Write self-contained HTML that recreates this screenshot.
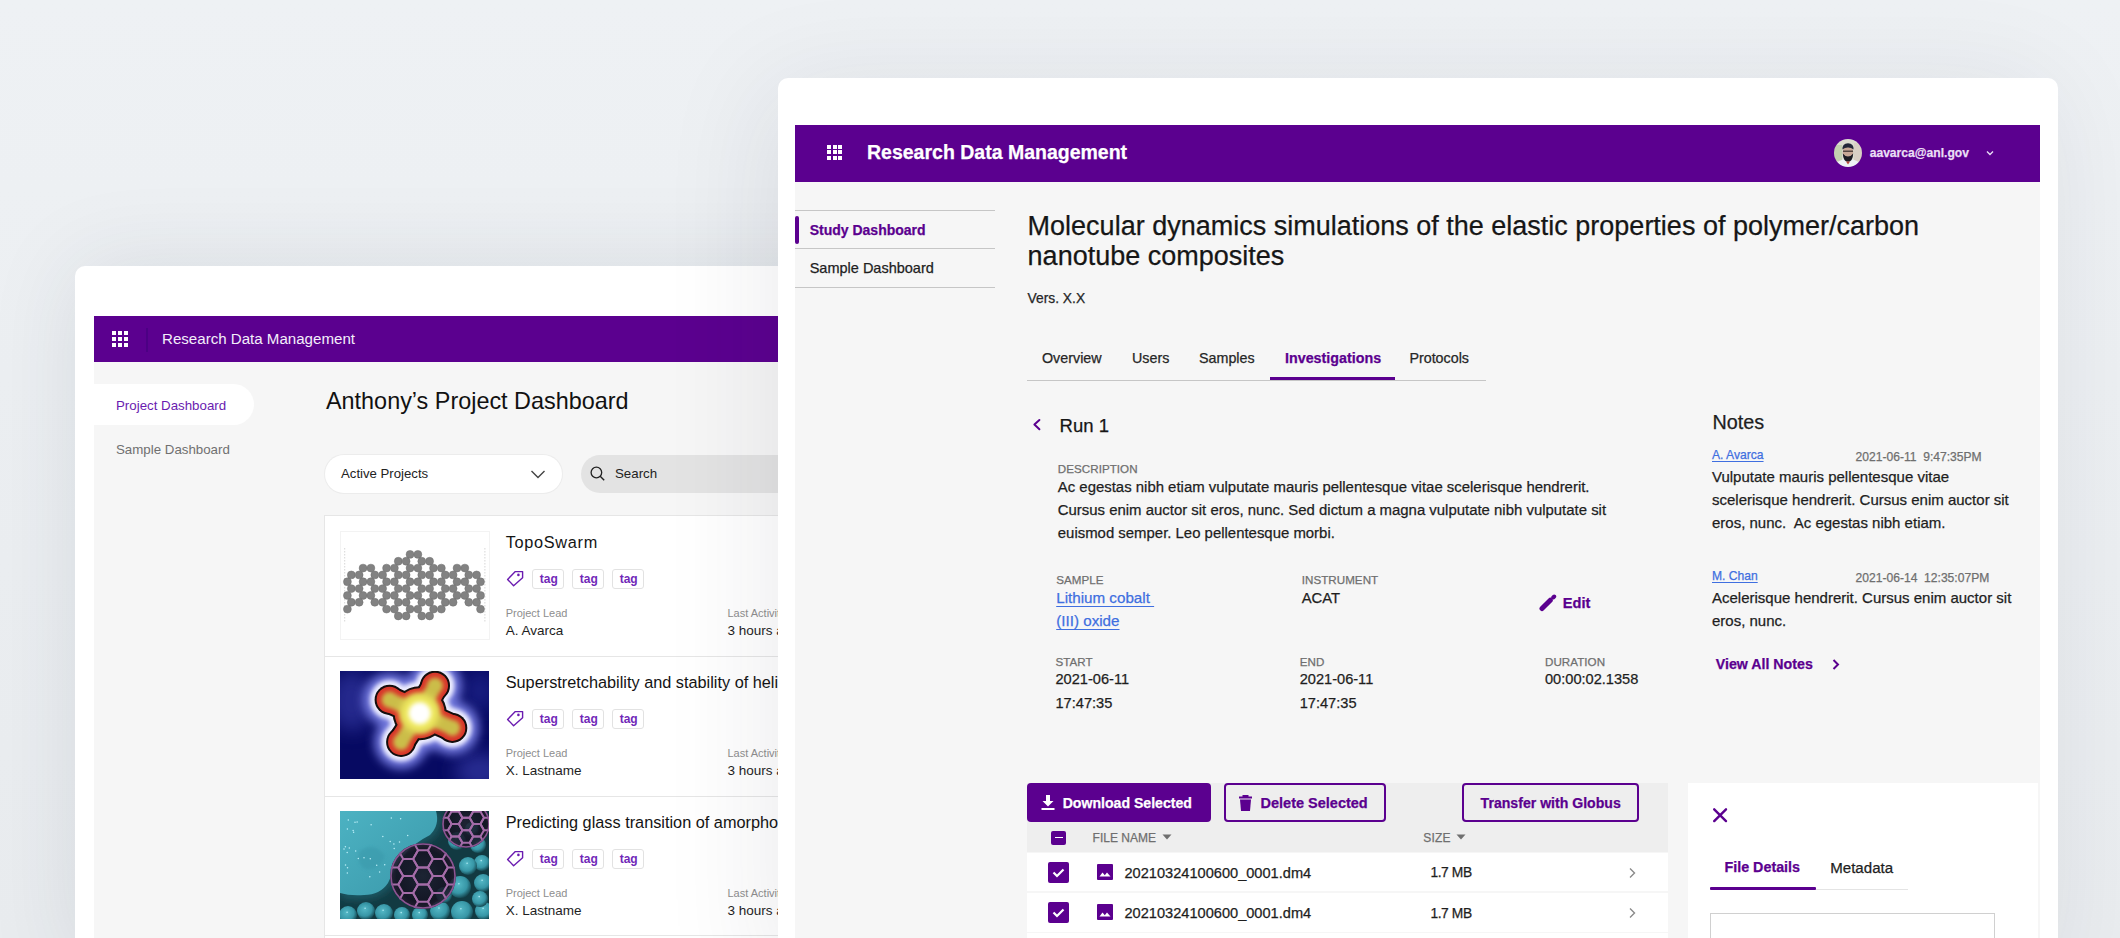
<!DOCTYPE html><html><head><meta charset="utf-8"><style>
html,body{margin:0;padding:0;}
body{width:2120px;height:938px;overflow:hidden;position:relative;background:#edf0f3;font-family:"Liberation Sans", sans-serif;}
.t{position:absolute;white-space:pre;line-height:1;}
.s{-webkit-text-stroke:0.25px currentColor;}
.b{position:absolute;}
</style></head><body>
<div class="b" style="left:0px;top:0px;width:2120px;height:938px;background:linear-gradient(180deg,#eef1f4 0%,#e9ecef 100%);"></div>
<div class="b" style="left:75px;top:266px;width:1000px;height:700px;background:#fff;border-radius:10px;box-shadow:0 0 90px rgba(40,50,70,0.10);"></div>
<div class="b" style="left:94px;top:316px;width:700px;height:46px;background:#5b008f;"></div>
<div class="b" style="left:94px;top:362px;width:700px;height:600px;background:#f6f6f6;"></div>
<div class="b" style="left:112px;top:331px;width:4px;height:4px;background:#fff;"></div>
<div class="b" style="left:112px;top:337px;width:4px;height:4px;background:#fff;"></div>
<div class="b" style="left:112px;top:343px;width:4px;height:4px;background:#fff;"></div>
<div class="b" style="left:118px;top:331px;width:4px;height:4px;background:#fff;"></div>
<div class="b" style="left:118px;top:337px;width:4px;height:4px;background:#fff;"></div>
<div class="b" style="left:118px;top:343px;width:4px;height:4px;background:#fff;"></div>
<div class="b" style="left:124px;top:331px;width:4px;height:4px;background:#fff;"></div>
<div class="b" style="left:124px;top:337px;width:4px;height:4px;background:#fff;"></div>
<div class="b" style="left:124px;top:343px;width:4px;height:4px;background:#fff;"></div>
<div class="b" style="left:146px;top:328px;width:2px;height:24px;background:#4c0084;"></div>
<div class="t " style="left:162.0px;top:331.22px;font-size:15.1px;color:#f3eefa;">Research Data Management</div>
<div class="b" style="left:94px;top:384px;width:160px;height:41px;background:#fff;border-radius:0 21px 21px 0;"></div>
<div class="t " style="left:116.0px;top:398.74px;font-size:13.3px;color:#6a1bb0;">Project Dashboard</div>
<div class="t " style="left:116.0px;top:442.74px;font-size:13.3px;color:#707070;">Sample Dashboard</div>
<div class="t " style="left:326.0px;top:390.19px;font-size:23.4px;color:#111;">Anthony’s Project Dashboard</div>
<div class="b" style="left:325px;top:455px;width:237px;height:38px;background:#fff;border-radius:19px;box-shadow:0 0 0 1px #ececec;"></div>
<div class="t " style="left:341.0px;top:467.43px;font-size:13.2px;color:#222;">Active Projects</div>
<svg style="position:absolute;left:530px;top:468px" width="16" height="12" viewBox="0 0 16 12"><path d="M1.5 3 L8 9.5 L14.5 3" fill="none" stroke="#444" stroke-width="1.4"/></svg>
<div class="b" style="left:581px;top:455px;width:400px;height:38px;background:#e3e3e3;border-radius:19px;"></div>
<svg style="position:absolute;left:589px;top:465px" width="18" height="18" viewBox="0 0 18 18"><circle cx="7.4" cy="7.5" r="5.3" fill="none" stroke="#222" stroke-width="1.3"/><path d="M11.2 11.3 L15.2 15.3" stroke="#222" stroke-width="1.4"/></svg>
<div class="t " style="left:615.0px;top:467.34px;font-size:13.3px;color:#222;">Search</div>
<div class="b" style="left:325px;top:516px;width:700px;height:440px;background:#fff;box-shadow:0 0 0 1px #e6e6e6;"></div>
<div class="b" style="left:341px;top:532px;width:148px;height:107px;background:#fff;box-shadow:0 0 0 1px #f3f3f3;overflow:hidden"><svg width="148" height="107" viewBox="0 0 148 107" style="position:absolute;left:0;top:0"><line x1="3.7" y1="16" x2="3.7" y2="90" stroke="#bbb" stroke-width="0.6" stroke-dasharray="1.5 1.5"/><line x1="143.9" y1="16" x2="143.9" y2="90" stroke="#bbb" stroke-width="0.6" stroke-dasharray="1.5 1.5"/><g fill="#828282" stroke="#6e6e6e" stroke-width="0.5"><circle cx="69.04" cy="22.40" r="3.95"/><circle cx="76.87" cy="22.40" r="3.95"/><circle cx="57.29" cy="29.24" r="3.95"/><circle cx="65.12" cy="29.24" r="3.95"/><circle cx="80.78" cy="29.24" r="3.95"/><circle cx="88.61" cy="29.24" r="3.95"/><circle cx="22.06" cy="36.08" r="3.95"/><circle cx="29.89" cy="36.08" r="3.95"/><circle cx="45.55" cy="36.08" r="3.95"/><circle cx="53.38" cy="36.08" r="3.95"/><circle cx="69.04" cy="36.08" r="3.95"/><circle cx="76.87" cy="36.08" r="3.95"/><circle cx="92.53" cy="36.08" r="3.95"/><circle cx="100.36" cy="36.08" r="3.95"/><circle cx="116.02" cy="36.08" r="3.95"/><circle cx="123.85" cy="36.08" r="3.95"/><circle cx="10.31" cy="42.92" r="3.95"/><circle cx="18.14" cy="42.92" r="3.95"/><circle cx="33.80" cy="42.92" r="3.95"/><circle cx="41.63" cy="42.92" r="3.95"/><circle cx="57.29" cy="42.92" r="3.95"/><circle cx="65.12" cy="42.92" r="3.95"/><circle cx="80.78" cy="42.92" r="3.95"/><circle cx="88.61" cy="42.92" r="3.95"/><circle cx="104.27" cy="42.92" r="3.95"/><circle cx="112.10" cy="42.92" r="3.95"/><circle cx="127.76" cy="42.92" r="3.95"/><circle cx="135.59" cy="42.92" r="3.95"/><circle cx="6.40" cy="49.76" r="3.95"/><circle cx="22.06" cy="49.76" r="3.95"/><circle cx="29.89" cy="49.76" r="3.95"/><circle cx="45.55" cy="49.76" r="3.95"/><circle cx="53.38" cy="49.76" r="3.95"/><circle cx="69.04" cy="49.76" r="3.95"/><circle cx="76.87" cy="49.76" r="3.95"/><circle cx="92.53" cy="49.76" r="3.95"/><circle cx="100.36" cy="49.76" r="3.95"/><circle cx="116.02" cy="49.76" r="3.95"/><circle cx="123.85" cy="49.76" r="3.95"/><circle cx="139.51" cy="49.76" r="3.95"/><circle cx="10.31" cy="56.60" r="3.95"/><circle cx="18.14" cy="56.60" r="3.95"/><circle cx="33.80" cy="56.60" r="3.95"/><circle cx="41.63" cy="56.60" r="3.95"/><circle cx="57.29" cy="56.60" r="3.95"/><circle cx="65.12" cy="56.60" r="3.95"/><circle cx="80.78" cy="56.60" r="3.95"/><circle cx="88.61" cy="56.60" r="3.95"/><circle cx="104.27" cy="56.60" r="3.95"/><circle cx="112.10" cy="56.60" r="3.95"/><circle cx="127.76" cy="56.60" r="3.95"/><circle cx="135.59" cy="56.60" r="3.95"/><circle cx="6.40" cy="63.44" r="3.95"/><circle cx="22.06" cy="63.44" r="3.95"/><circle cx="29.89" cy="63.44" r="3.95"/><circle cx="45.55" cy="63.44" r="3.95"/><circle cx="53.38" cy="63.44" r="3.95"/><circle cx="69.04" cy="63.44" r="3.95"/><circle cx="76.87" cy="63.44" r="3.95"/><circle cx="92.53" cy="63.44" r="3.95"/><circle cx="100.36" cy="63.44" r="3.95"/><circle cx="116.02" cy="63.44" r="3.95"/><circle cx="123.85" cy="63.44" r="3.95"/><circle cx="139.51" cy="63.44" r="3.95"/><circle cx="10.31" cy="70.28" r="3.95"/><circle cx="18.14" cy="70.28" r="3.95"/><circle cx="33.80" cy="70.28" r="3.95"/><circle cx="41.63" cy="70.28" r="3.95"/><circle cx="57.29" cy="70.28" r="3.95"/><circle cx="65.12" cy="70.28" r="3.95"/><circle cx="80.78" cy="70.28" r="3.95"/><circle cx="88.61" cy="70.28" r="3.95"/><circle cx="104.27" cy="70.28" r="3.95"/><circle cx="112.10" cy="70.28" r="3.95"/><circle cx="127.76" cy="70.28" r="3.95"/><circle cx="135.59" cy="70.28" r="3.95"/><circle cx="6.40" cy="77.12" r="3.95"/><circle cx="45.55" cy="77.12" r="3.95"/><circle cx="53.38" cy="77.12" r="3.95"/><circle cx="69.04" cy="77.12" r="3.95"/><circle cx="76.87" cy="77.12" r="3.95"/><circle cx="92.53" cy="77.12" r="3.95"/><circle cx="100.36" cy="77.12" r="3.95"/><circle cx="139.51" cy="77.12" r="3.95"/><circle cx="57.29" cy="83.96" r="3.95"/><circle cx="65.12" cy="83.96" r="3.95"/><circle cx="80.78" cy="83.96" r="3.95"/><circle cx="88.61" cy="83.96" r="3.95"/></g></svg></div>
<div class="t " style="left:505.7px;top:533.80px;font-size:16.3px;color:#141414;letter-spacing:0.7px;">TopoSwarm</div>
<svg style="position:absolute;left:506px;top:570px" width="18" height="18" viewBox="0 0 18 18"><path d="M1.6 9.4 L9.3 1.6 L16.6 1.6 L16.6 7.7 L7.6 15.7 Z" fill="none" stroke="#6a1bb0" stroke-width="1.4" stroke-linejoin="round"/><circle cx="12.4" cy="4.9" r="1.3" fill="#6a1bb0"/></svg>
<div class="b" style="left:532.3px;top:568.5px;width:30px;height:18px;border:1px solid #e2e2e2;border-radius:3px;background:#fff"></div>
<div class="t " style="left:539.8px;top:573.04px;font-size:12px;color:#7028b8;font-weight:700;">tag</div>
<div class="b" style="left:572.3px;top:568.5px;width:30px;height:18px;border:1px solid #e2e2e2;border-radius:3px;background:#fff"></div>
<div class="t " style="left:579.8px;top:573.04px;font-size:12px;color:#7028b8;font-weight:700;">tag</div>
<div class="b" style="left:612.2px;top:568.5px;width:30px;height:18px;border:1px solid #e2e2e2;border-radius:3px;background:#fff"></div>
<div class="t " style="left:619.7px;top:573.04px;font-size:12px;color:#7028b8;font-weight:700;">tag</div>
<div class="t " style="left:505.7px;top:608.39px;font-size:11px;color:#8e8e8e;">Project Lead</div>
<div class="t " style="left:505.7px;top:624.07px;font-size:13.5px;color:#1e1e1e;">A. Avarca</div>
<div class="t " style="left:727.5px;top:608.39px;font-size:11px;color:#8e8e8e;">Last Activity</div>
<div class="t " style="left:727.5px;top:624.07px;font-size:13.5px;color:#1e1e1e;">3 hours ago</div>
<div class="b" style="left:325px;top:656px;width:700px;height:1px;background:#e6e6e6;"></div>
<div class="b" style="left:340px;top:671px;width:149px;height:108px;overflow:hidden"><svg width="149" height="108" viewBox="0 0 149 108" style="position:absolute;left:0;top:0"><defs><filter id="bl1" x="-50%" y="-50%" width="200%" height="200%"><feGaussianBlur stdDeviation="5"/></filter><filter id="bl2" x="-50%" y="-50%" width="200%" height="200%"><feGaussianBlur stdDeviation="2.2"/></filter><filter id="bl4" x="-50%" y="-50%" width="200%" height="200%"><feGaussianBlur stdDeviation="0.7"/></filter><filter id="bl3" x="-50%" y="-50%" width="200%" height="200%"><feGaussianBlur stdDeviation="3.5"/></filter><filter id="bl5" x="-50%" y="-50%" width="200%" height="200%"><feGaussianBlur stdDeviation="9"/></filter></defs><rect width="149" height="108" fill="#070a62"/><ellipse cx="12" cy="30" rx="22" ry="30" fill="#3c42b0" opacity="0.55" filter="url(#bl5)"/><ellipse cx="140" cy="100" rx="25" ry="18" fill="#3c42b0" opacity="0.6" filter="url(#bl5)"/><ellipse cx="140" cy="20" rx="15" ry="20" fill="#2c32a0" opacity="0.5" filter="url(#bl5)"/><g filter="url(#bl1)"><line x1="79.7" y1="42.2" x2="49.6" y2="28.8" stroke="#7076dc" stroke-width="52.4" stroke-linecap="round"/><line x1="79.7" y1="42.2" x2="95" y2="14.7" stroke="#7076dc" stroke-width="52.4" stroke-linecap="round"/><line x1="79.7" y1="42.2" x2="112.3" y2="56.9" stroke="#7076dc" stroke-width="52.4" stroke-linecap="round"/><line x1="79.7" y1="42.2" x2="61.1" y2="71" stroke="#7076dc" stroke-width="52.4" stroke-linecap="round"/><circle cx="49.6" cy="28.8" r="27.0" fill="#7076dc"/><circle cx="95" cy="14.7" r="27.0" fill="#7076dc"/><circle cx="112.3" cy="56.9" r="27.0" fill="#7076dc"/><circle cx="61.1" cy="71" r="27.0" fill="#7076dc"/><circle cx="79.7" cy="42.2" r="39.0" fill="#7076dc"/></g><g filter="url(#bl2)"><line x1="79.7" y1="42.2" x2="49.6" y2="28.8" stroke="#eeeeff" stroke-width="37.4" stroke-linecap="round"/><line x1="79.7" y1="42.2" x2="95" y2="14.7" stroke="#eeeeff" stroke-width="37.4" stroke-linecap="round"/><line x1="79.7" y1="42.2" x2="112.3" y2="56.9" stroke="#eeeeff" stroke-width="37.4" stroke-linecap="round"/><line x1="79.7" y1="42.2" x2="61.1" y2="71" stroke="#eeeeff" stroke-width="37.4" stroke-linecap="round"/><circle cx="49.6" cy="28.8" r="19.5" fill="#eeeeff"/><circle cx="95" cy="14.7" r="19.5" fill="#eeeeff"/><circle cx="112.3" cy="56.9" r="19.5" fill="#eeeeff"/><circle cx="61.1" cy="71" r="19.5" fill="#eeeeff"/><circle cx="79.7" cy="42.2" r="31.5" fill="#eeeeff"/></g><g filter="url(#bl4)"><line x1="79.7" y1="42.2" x2="49.6" y2="28.8" stroke="#120c10" stroke-width="28.4" stroke-linecap="round"/><line x1="79.7" y1="42.2" x2="95" y2="14.7" stroke="#120c10" stroke-width="28.4" stroke-linecap="round"/><line x1="79.7" y1="42.2" x2="112.3" y2="56.9" stroke="#120c10" stroke-width="28.4" stroke-linecap="round"/><line x1="79.7" y1="42.2" x2="61.1" y2="71" stroke="#120c10" stroke-width="28.4" stroke-linecap="round"/><circle cx="49.6" cy="28.8" r="15.0" fill="#120c10"/><circle cx="95" cy="14.7" r="15.0" fill="#120c10"/><circle cx="112.3" cy="56.9" r="15.0" fill="#120c10"/><circle cx="61.1" cy="71" r="15.0" fill="#120c10"/><circle cx="79.7" cy="42.2" r="27.0" fill="#120c10"/></g><g filter="url(#bl4)"><line x1="79.7" y1="42.2" x2="49.6" y2="28.8" stroke="#d8362a" stroke-width="24.4" stroke-linecap="round"/><line x1="79.7" y1="42.2" x2="95" y2="14.7" stroke="#d8362a" stroke-width="24.4" stroke-linecap="round"/><line x1="79.7" y1="42.2" x2="112.3" y2="56.9" stroke="#d8362a" stroke-width="24.4" stroke-linecap="round"/><line x1="79.7" y1="42.2" x2="61.1" y2="71" stroke="#d8362a" stroke-width="24.4" stroke-linecap="round"/><circle cx="49.6" cy="28.8" r="13.0" fill="#d8362a"/><circle cx="95" cy="14.7" r="13.0" fill="#d8362a"/><circle cx="112.3" cy="56.9" r="13.0" fill="#d8362a"/><circle cx="61.1" cy="71" r="13.0" fill="#d8362a"/><circle cx="79.7" cy="42.2" r="25.0" fill="#d8362a"/></g><g filter="url(#bl2)"><line x1="79.7" y1="42.2" x2="49.6" y2="28.8" stroke="#cbbd4a" stroke-width="14.4" stroke-linecap="round"/><line x1="79.7" y1="42.2" x2="95" y2="14.7" stroke="#cbbd4a" stroke-width="14.4" stroke-linecap="round"/><line x1="79.7" y1="42.2" x2="112.3" y2="56.9" stroke="#cbbd4a" stroke-width="14.4" stroke-linecap="round"/><line x1="79.7" y1="42.2" x2="61.1" y2="71" stroke="#cbbd4a" stroke-width="14.4" stroke-linecap="round"/><circle cx="49.6" cy="28.8" r="8.0" fill="#cbbd4a"/><circle cx="95" cy="14.7" r="8.0" fill="#cbbd4a"/><circle cx="112.3" cy="56.9" r="8.0" fill="#cbbd4a"/><circle cx="61.1" cy="71" r="8.0" fill="#cbbd4a"/><circle cx="79.7" cy="42.2" r="20.0" fill="#cbbd4a"/></g><circle cx="79.7" cy="42.2" r="19" fill="#f0ea60" filter="url(#bl3)"/><circle cx="79.7" cy="42.2" r="11" fill="#ffffff" filter="url(#bl2)"/></svg></div>
<div class="t " style="left:505.7px;top:673.80px;font-size:16.3px;color:#141414;">Superstretchability and stability of helical structures</div>
<svg style="position:absolute;left:506px;top:710px" width="18" height="18" viewBox="0 0 18 18"><path d="M1.6 9.4 L9.3 1.6 L16.6 1.6 L16.6 7.7 L7.6 15.7 Z" fill="none" stroke="#6a1bb0" stroke-width="1.4" stroke-linejoin="round"/><circle cx="12.4" cy="4.9" r="1.3" fill="#6a1bb0"/></svg>
<div class="b" style="left:532.3px;top:708.5px;width:30px;height:18px;border:1px solid #e2e2e2;border-radius:3px;background:#fff"></div>
<div class="t " style="left:539.8px;top:713.04px;font-size:12px;color:#7028b8;font-weight:700;">tag</div>
<div class="b" style="left:572.3px;top:708.5px;width:30px;height:18px;border:1px solid #e2e2e2;border-radius:3px;background:#fff"></div>
<div class="t " style="left:579.8px;top:713.04px;font-size:12px;color:#7028b8;font-weight:700;">tag</div>
<div class="b" style="left:612.2px;top:708.5px;width:30px;height:18px;border:1px solid #e2e2e2;border-radius:3px;background:#fff"></div>
<div class="t " style="left:619.7px;top:713.04px;font-size:12px;color:#7028b8;font-weight:700;">tag</div>
<div class="t " style="left:505.7px;top:748.39px;font-size:11px;color:#8e8e8e;">Project Lead</div>
<div class="t " style="left:505.7px;top:764.07px;font-size:13.5px;color:#1e1e1e;">X. Lastname</div>
<div class="t " style="left:727.5px;top:748.39px;font-size:11px;color:#8e8e8e;">Last Activity</div>
<div class="t " style="left:727.5px;top:764.07px;font-size:13.5px;color:#1e1e1e;">3 hours ago</div>
<div class="b" style="left:325px;top:796px;width:700px;height:1px;background:#e6e6e6;"></div>
<div class="b" style="left:325px;top:935px;width:700px;height:1px;background:#e6e6e6;"></div>
<div class="b" style="left:340px;top:811px;width:149px;height:108px;overflow:hidden"><svg width="149" height="108" viewBox="0 0 149 108" style="position:absolute;left:0;top:0"><defs><radialGradient id="sp" cx="0.42" cy="0.38" r="0.62"><stop offset="0" stop-color="#54b8c6"/><stop offset="0.65" stop-color="#3796a6"/><stop offset="1" stop-color="#174c56"/></radialGradient><radialGradient id="bb" cx="0.5" cy="0.5" r="0.5"><stop offset="0" stop-color="#1e2030"/><stop offset="0.8" stop-color="#141020"/><stop offset="1" stop-color="#2a1a30"/></radialGradient><linearGradient id="tb" x1="0" y1="0" x2="1" y2="1"><stop offset="0" stop-color="#4cb2c2"/><stop offset="1" stop-color="#3a98aa"/></linearGradient><filter id="bb1" x="-30%" y="-30%" width="160%" height="160%"><feGaussianBlur stdDeviation="1.5"/></filter><filter id="bb2" x="-30%" y="-30%" width="160%" height="160%"><feGaussianBlur stdDeviation="4"/></filter></defs><rect width="149" height="108" fill="#123a42"/><circle cx="8" cy="104" r="9" fill="url(#sp)"/><circle cx="7.1" cy="101.3" r="0.8" fill="#c8f8ff" opacity="0.8"/><circle cx="26" cy="100" r="9" fill="url(#sp)"/><circle cx="25.1" cy="97.3" r="0.8" fill="#c8f8ff" opacity="0.8"/><circle cx="44" cy="102" r="9" fill="url(#sp)"/><circle cx="43.1" cy="99.3" r="0.8" fill="#c8f8ff" opacity="0.8"/><circle cx="62" cy="104" r="8" fill="url(#sp)"/><circle cx="61.2" cy="101.6" r="0.8" fill="#c8f8ff" opacity="0.8"/><circle cx="80" cy="104" r="8" fill="url(#sp)"/><circle cx="79.2" cy="101.6" r="0.8" fill="#c8f8ff" opacity="0.8"/><circle cx="100" cy="100" r="10" fill="url(#sp)"/><circle cx="99.0" cy="97.0" r="0.8" fill="#c8f8ff" opacity="0.8"/><circle cx="122" cy="101" r="11" fill="url(#sp)"/><circle cx="120.9" cy="97.7" r="0.8" fill="#c8f8ff" opacity="0.8"/><circle cx="144" cy="100" r="9" fill="url(#sp)"/><circle cx="143.1" cy="97.3" r="0.8" fill="#c8f8ff" opacity="0.8"/><circle cx="120" cy="76" r="11" fill="url(#sp)"/><circle cx="118.9" cy="72.7" r="0.8" fill="#c8f8ff" opacity="0.8"/><circle cx="143" cy="72" r="9" fill="url(#sp)"/><circle cx="142.1" cy="69.3" r="0.8" fill="#c8f8ff" opacity="0.8"/><circle cx="142" cy="52" r="8" fill="url(#sp)"/><circle cx="141.2" cy="49.6" r="0.8" fill="#c8f8ff" opacity="0.8"/><circle cx="128" cy="55" r="9" fill="url(#sp)"/><circle cx="127.1" cy="52.3" r="0.8" fill="#c8f8ff" opacity="0.8"/><circle cx="138" cy="34" r="8" fill="url(#sp)"/><circle cx="137.2" cy="31.6" r="0.8" fill="#c8f8ff" opacity="0.8"/><circle cx="117" cy="30" r="9" fill="url(#sp)"/><circle cx="116.1" cy="27.3" r="0.8" fill="#c8f8ff" opacity="0.8"/><circle cx="104" cy="84" r="8" fill="url(#sp)"/><circle cx="103.2" cy="81.6" r="0.8" fill="#c8f8ff" opacity="0.8"/><circle cx="140" cy="88" r="8" fill="url(#sp)"/><circle cx="139.2" cy="85.6" r="0.8" fill="#c8f8ff" opacity="0.8"/><circle cx="132" cy="18" r="7" fill="url(#sp)"/><circle cx="131.3" cy="15.9" r="0.8" fill="#c8f8ff" opacity="0.8"/><path d="M0 0 H100 Q104 14 94 26 Q78 34 68 46 Q58 60 52 74 Q44 86 26 88 Q10 90 0 86 Z" fill="#1c5a66" filter="url(#bb2)"/><path d="M0 0 H96 Q100 14 90 24 Q74 32 64 44 Q54 58 48 72 Q40 84 24 84 Q10 85 0 82 Z" fill="url(#tb)"/><path d="M20 40 Q35 30 45 45 Q40 60 25 58 Q15 52 20 40 Z" fill="#3a9aac" opacity="0.6" filter="url(#bb1)"/><circle cx="31.1" cy="13.8" r="0.75" fill="#c8f6ff" opacity="0.9"/><circle cx="60.6" cy="7.7" r="0.75" fill="#c8f6ff" opacity="0.9"/><circle cx="50.2" cy="30.5" r="0.75" fill="#c8f6ff" opacity="0.9"/><circle cx="7.2" cy="41.6" r="0.75" fill="#c8f6ff" opacity="0.9"/><circle cx="5.4" cy="35.8" r="0.75" fill="#c8f6ff" opacity="0.9"/><circle cx="8.3" cy="9.1" r="0.75" fill="#c8f6ff" opacity="0.9"/><circle cx="13.1" cy="19.4" r="0.75" fill="#c8f6ff" opacity="0.9"/><circle cx="53.9" cy="32.9" r="0.75" fill="#c8f6ff" opacity="0.9"/><circle cx="15.0" cy="11.2" r="0.75" fill="#c8f6ff" opacity="0.9"/><circle cx="29.8" cy="65.7" r="0.75" fill="#c8f6ff" opacity="0.9"/><circle cx="18.3" cy="47.4" r="0.75" fill="#c8f6ff" opacity="0.9"/><circle cx="59.5" cy="31.0" r="0.75" fill="#c8f6ff" opacity="0.9"/><circle cx="51.3" cy="6.9" r="0.75" fill="#c8f6ff" opacity="0.9"/><circle cx="7.4" cy="18.1" r="0.75" fill="#c8f6ff" opacity="0.9"/><circle cx="30.3" cy="47.7" r="0.75" fill="#c8f6ff" opacity="0.9"/><circle cx="42.8" cy="25.4" r="0.75" fill="#c8f6ff" opacity="0.9"/><circle cx="24.0" cy="46.8" r="0.75" fill="#c8f6ff" opacity="0.9"/><circle cx="67.7" cy="24.5" r="0.75" fill="#c8f6ff" opacity="0.9"/><circle cx="39.6" cy="61.1" r="0.75" fill="#c8f6ff" opacity="0.9"/><circle cx="15.7" cy="40.1" r="0.75" fill="#c8f6ff" opacity="0.9"/><circle cx="5.5" cy="54.1" r="0.75" fill="#c8f6ff" opacity="0.9"/><circle cx="54.2" cy="37.6" r="0.75" fill="#c8f6ff" opacity="0.9"/><circle cx="44.7" cy="53.8" r="0.75" fill="#c8f6ff" opacity="0.9"/><circle cx="7.5" cy="56.7" r="0.75" fill="#c8f6ff" opacity="0.9"/><circle cx="36.7" cy="54.2" r="0.75" fill="#c8f6ff" opacity="0.9"/><circle cx="4.0" cy="38.0" r="0.75" fill="#c8f6ff" opacity="0.9"/><circle cx="17.1" cy="11.1" r="0.75" fill="#c8f6ff" opacity="0.9"/><circle cx="7.3" cy="61.9" r="0.75" fill="#c8f6ff" opacity="0.9"/><circle cx="13.6" cy="21.3" r="0.75" fill="#c8f6ff" opacity="0.9"/><circle cx="9.3" cy="37.0" r="0.75" fill="#c8f6ff" opacity="0.9"/><circle cx="126" cy="13" r="24" fill="url(#bb)" opacity="0.85"/><clipPath id="cp126"><circle cx="126" cy="13" r="24"/></clipPath><g clip-path="url(#cp126)"><polygon points="111.6,13.0 108.0,19.2 100.8,19.2 97.2,13.0 100.8,6.8 108.0,6.8" fill="none" stroke="#a46ca8" stroke-width="2" stroke-linejoin="round"/><polygon points="122.4,-5.7 118.8,0.5 111.6,0.5 108.0,-5.7 111.6,-11.9 118.8,-11.9" fill="none" stroke="#a46ca8" stroke-width="2" stroke-linejoin="round"/><polygon points="122.4,6.8 118.8,13.0 111.6,13.0 108.0,6.8 111.6,0.5 118.8,0.5" fill="none" stroke="#a46ca8" stroke-width="2" stroke-linejoin="round"/><polygon points="122.4,19.2 118.8,25.5 111.6,25.5 108.0,19.2 111.6,13.0 118.8,13.0" fill="none" stroke="#a46ca8" stroke-width="2" stroke-linejoin="round"/><polygon points="122.4,31.7 118.8,37.9 111.6,37.9 108.0,31.7 111.6,25.5 118.8,25.5" fill="none" stroke="#a46ca8" stroke-width="2" stroke-linejoin="round"/><polygon points="133.2,0.5 129.6,6.8 122.4,6.8 118.8,0.5 122.4,-5.7 129.6,-5.7" fill="none" stroke="#a46ca8" stroke-width="2" stroke-linejoin="round"/><polygon points="133.2,13.0 129.6,19.2 122.4,19.2 118.8,13.0 122.4,6.8 129.6,6.8" fill="none" stroke="#a46ca8" stroke-width="2" stroke-linejoin="round"/><polygon points="133.2,25.5 129.6,31.7 122.4,31.7 118.8,25.5 122.4,19.2 129.6,19.2" fill="none" stroke="#a46ca8" stroke-width="2" stroke-linejoin="round"/><polygon points="144.0,-5.7 140.4,0.5 133.2,0.5 129.6,-5.7 133.2,-11.9 140.4,-11.9" fill="none" stroke="#a46ca8" stroke-width="2" stroke-linejoin="round"/><polygon points="144.0,6.8 140.4,13.0 133.2,13.0 129.6,6.8 133.2,0.5 140.4,0.5" fill="none" stroke="#a46ca8" stroke-width="2" stroke-linejoin="round"/><polygon points="144.0,19.2 140.4,25.5 133.2,25.5 129.6,19.2 133.2,13.0 140.4,13.0" fill="none" stroke="#a46ca8" stroke-width="2" stroke-linejoin="round"/><polygon points="144.0,31.7 140.4,37.9 133.2,37.9 129.6,31.7 133.2,25.5 140.4,25.5" fill="none" stroke="#a46ca8" stroke-width="2" stroke-linejoin="round"/><polygon points="154.8,13.0 151.2,19.2 144.0,19.2 140.4,13.0 144.0,6.8 151.2,6.8" fill="none" stroke="#a46ca8" stroke-width="2" stroke-linejoin="round"/></g><circle cx="126" cy="13" r="23" fill="none" stroke="#8c5694" stroke-width="1.6"/><circle cx="83" cy="65" r="33" fill="url(#bb)" opacity="0.85"/><clipPath id="cp83"><circle cx="83" cy="65" r="33"/></clipPath><g clip-path="url(#cp83)"><polygon points="63.2,65.0 58.2,73.6 48.4,73.6 43.4,65.0 48.3,56.4 58.2,56.4" fill="none" stroke="#a46ca8" stroke-width="2" stroke-linejoin="round"/><polygon points="78.1,39.3 73.1,47.9 63.2,47.9 58.3,39.3 63.2,30.7 73.1,30.7" fill="none" stroke="#a46ca8" stroke-width="2" stroke-linejoin="round"/><polygon points="78.1,56.4 73.1,65.0 63.2,65.0 58.3,56.4 63.2,47.9 73.1,47.9" fill="none" stroke="#a46ca8" stroke-width="2" stroke-linejoin="round"/><polygon points="78.1,73.6 73.1,82.1 63.2,82.1 58.3,73.6 63.2,65.0 73.1,65.0" fill="none" stroke="#a46ca8" stroke-width="2" stroke-linejoin="round"/><polygon points="78.1,90.7 73.1,99.3 63.2,99.3 58.3,90.7 63.2,82.1 73.1,82.1" fill="none" stroke="#a46ca8" stroke-width="2" stroke-linejoin="round"/><polygon points="92.9,47.9 88.0,56.4 78.0,56.4 73.1,47.9 78.0,39.3 88.0,39.3" fill="none" stroke="#a46ca8" stroke-width="2" stroke-linejoin="round"/><polygon points="92.9,65.0 88.0,73.6 78.0,73.6 73.1,65.0 78.0,56.4 88.0,56.4" fill="none" stroke="#a46ca8" stroke-width="2" stroke-linejoin="round"/><polygon points="92.9,82.1 88.0,90.7 78.0,90.7 73.1,82.1 78.0,73.6 88.0,73.6" fill="none" stroke="#a46ca8" stroke-width="2" stroke-linejoin="round"/><polygon points="107.8,39.3 102.8,47.9 92.9,47.9 87.9,39.3 92.9,30.7 102.8,30.7" fill="none" stroke="#a46ca8" stroke-width="2" stroke-linejoin="round"/><polygon points="107.8,56.4 102.8,65.0 92.9,65.0 87.9,56.4 92.9,47.9 102.8,47.9" fill="none" stroke="#a46ca8" stroke-width="2" stroke-linejoin="round"/><polygon points="107.8,73.6 102.8,82.1 92.9,82.1 87.9,73.6 92.9,65.0 102.8,65.0" fill="none" stroke="#a46ca8" stroke-width="2" stroke-linejoin="round"/><polygon points="107.8,90.7 102.8,99.3 92.9,99.3 87.9,90.7 92.9,82.1 102.8,82.1" fill="none" stroke="#a46ca8" stroke-width="2" stroke-linejoin="round"/><polygon points="122.6,65.0 117.7,73.6 107.8,73.6 102.8,65.0 107.8,56.4 117.7,56.4" fill="none" stroke="#a46ca8" stroke-width="2" stroke-linejoin="round"/></g><circle cx="83" cy="65" r="32" fill="none" stroke="#8c5694" stroke-width="1.6"/></svg></div>
<div class="t " style="left:505.7px;top:813.80px;font-size:16.3px;color:#141414;">Predicting glass transition of amorphous polymers</div>
<svg style="position:absolute;left:506px;top:850px" width="18" height="18" viewBox="0 0 18 18"><path d="M1.6 9.4 L9.3 1.6 L16.6 1.6 L16.6 7.7 L7.6 15.7 Z" fill="none" stroke="#6a1bb0" stroke-width="1.4" stroke-linejoin="round"/><circle cx="12.4" cy="4.9" r="1.3" fill="#6a1bb0"/></svg>
<div class="b" style="left:532.3px;top:848.5px;width:30px;height:18px;border:1px solid #e2e2e2;border-radius:3px;background:#fff"></div>
<div class="t " style="left:539.8px;top:853.04px;font-size:12px;color:#7028b8;font-weight:700;">tag</div>
<div class="b" style="left:572.3px;top:848.5px;width:30px;height:18px;border:1px solid #e2e2e2;border-radius:3px;background:#fff"></div>
<div class="t " style="left:579.8px;top:853.04px;font-size:12px;color:#7028b8;font-weight:700;">tag</div>
<div class="b" style="left:612.2px;top:848.5px;width:30px;height:18px;border:1px solid #e2e2e2;border-radius:3px;background:#fff"></div>
<div class="t " style="left:619.7px;top:853.04px;font-size:12px;color:#7028b8;font-weight:700;">tag</div>
<div class="t " style="left:505.7px;top:888.39px;font-size:11px;color:#8e8e8e;">Project Lead</div>
<div class="t " style="left:505.7px;top:904.07px;font-size:13.5px;color:#1e1e1e;">X. Lastname</div>
<div class="t " style="left:727.5px;top:888.39px;font-size:11px;color:#8e8e8e;">Last Activity</div>
<div class="t " style="left:727.5px;top:904.07px;font-size:13.5px;color:#1e1e1e;">3 hours ago</div>
<div class="b" style="left:778px;top:78px;width:1280px;height:900px;background:#fff;border-radius:10px;box-shadow:-12px 10px 110px rgba(30,40,60,0.085);"></div>
<div class="b" style="left:795px;top:125px;width:1245px;height:57px;background:#5b008f;"></div>
<div class="b" style="left:795px;top:182px;width:1245px;height:800px;background:#f6f6f6;"></div>
<div class="b" style="left:827.3px;top:145.0px;width:4px;height:4px;background:#fff;"></div>
<div class="b" style="left:827.3px;top:150.3px;width:4px;height:4px;background:#fff;"></div>
<div class="b" style="left:827.3px;top:155.6px;width:4px;height:4px;background:#fff;"></div>
<div class="b" style="left:832.5999999999999px;top:145.0px;width:4px;height:4px;background:#fff;"></div>
<div class="b" style="left:832.5999999999999px;top:150.3px;width:4px;height:4px;background:#fff;"></div>
<div class="b" style="left:832.5999999999999px;top:155.6px;width:4px;height:4px;background:#fff;"></div>
<div class="b" style="left:837.9px;top:145.0px;width:4px;height:4px;background:#fff;"></div>
<div class="b" style="left:837.9px;top:150.3px;width:4px;height:4px;background:#fff;"></div>
<div class="b" style="left:837.9px;top:155.6px;width:4px;height:4px;background:#fff;"></div>
<div class="t s" style="left:867.0px;top:143.49px;font-size:19.5px;color:#fff;font-weight:700;">Research Data Management</div>
<svg style="position:absolute;left:1834px;top:139px" width="28" height="28" viewBox="0 0 28 28">
<defs><clipPath id="av"><circle cx="14" cy="14" r="14"/></clipPath><filter id="avb"><feGaussianBlur stdDeviation="0.6"/></filter></defs>
<g clip-path="url(#av)"><g filter="url(#avb)"><rect width="28" height="28" fill="#dcdcd0"/><rect x="0" y="6" width="8" height="16" fill="#c4d0b0"/><rect x="20" y="4" width="8" height="18" fill="#d8cfc4"/>
<path d="M1 28 Q3 20 14 20 Q25 20 27 28 Z" fill="#eef2f6"/>
<ellipse cx="14" cy="13" rx="5.4" ry="6.6" fill="#c8a896"/>
<path d="M8.4 10.5 Q8 4.5 14 4.2 Q20 4.5 19.6 10.5 Q17 8.5 14 8.6 Q11 8.5 8.4 10.5 Z" fill="#222838"/>
<rect x="9" y="11.6" width="10" height="1.2" fill="#3a3030"/>
<path d="M8.8 14.5 Q9.2 22.5 14 22.8 Q18.8 22.5 19.2 14.5 Q17 17.5 14 17.5 Q11 17.5 8.8 14.5 Z" fill="#1a1a22"/>
<path d="M12 22.5 L14 25.5 L16 22.5 Z" fill="#b84838"/>
</g></g></svg>
<div class="t s" style="left:1869.7px;top:147.26px;font-size:12.1px;color:#eadff5;font-weight:700;">aavarca@anl.gov</div>
<svg style="position:absolute;left:1985px;top:149px" width="10" height="8" viewBox="0 0 10 8"><path d="M2 2.5 L5 5.5 L8 2.5" fill="none" stroke="#e8dcf5" stroke-width="1.4"/></svg>
<div class="b" style="left:795px;top:210px;width:200px;height:1px;background:#c6c6c6;"></div>
<div class="b" style="left:795px;top:248px;width:200px;height:1px;background:#c6c6c6;"></div>
<div class="b" style="left:795px;top:287px;width:200px;height:1px;background:#c6c6c6;"></div>
<div class="b" style="left:795px;top:216px;width:4px;height:28px;background:#5b008f;border-radius:2px;"></div>
<div class="t s" style="left:809.7px;top:223.45px;font-size:14.0px;color:#5b008f;font-weight:700;">Study Dashboard</div>
<div class="t s" style="left:809.7px;top:261.33px;font-size:14.5px;color:#1e1e1e;">Sample Dashboard</div>
<div class="t s" style="left:1027.6px;top:213.14px;font-size:27px;color:#161616;">Molecular dynamics simulations of the elastic properties of polymer/carbon</div>
<div class="t s" style="left:1027.6px;top:243.14px;font-size:27px;color:#161616;">nanotube composites</div>
<div class="t s" style="left:1027.6px;top:291.72px;font-size:13.8px;color:#262626;">Vers. X.X</div>
<div class="t s" style="left:1042.0px;top:350.70px;font-size:14.3px;color:#262626;">Overview</div>
<div class="t s" style="left:1132.0px;top:350.70px;font-size:14.3px;color:#262626;">Users</div>
<div class="t s" style="left:1199.0px;top:350.70px;font-size:14.3px;color:#262626;">Samples</div>
<div class="t s" style="left:1285.0px;top:350.70px;font-size:14.3px;color:#5b008f;font-weight:700;">Investigations</div>
<div class="t s" style="left:1409.4px;top:350.70px;font-size:14.3px;color:#262626;">Protocols</div>
<div class="b" style="left:1027px;top:380px;width:459px;height:1px;background:#c6c6c6;"></div>
<div class="b" style="left:1270px;top:377px;width:125px;height:3px;background:#5b008f;"></div>
<svg style="position:absolute;left:1031px;top:417px" width="12" height="14" viewBox="0 0 12 14"><path d="M8.4 3 L3.4 7.6 L8.4 12.3" fill="none" stroke="#5b008f" stroke-width="2" stroke-linecap="round" stroke-linejoin="round"/></svg>
<div class="t s" style="left:1059.6px;top:417.34px;font-size:18.5px;color:#161616;">Run 1</div>
<div class="t s" style="left:1057.8px;top:463.48px;font-size:11.6px;color:#6f6f6f;letter-spacing:0.05px;">DESCRIPTION</div>
<div class="t s" style="left:1057.8px;top:479.86px;font-size:14.93px;color:#1e1e1e;">Ac egestas nibh etiam vulputate mauris pellentesque vitae scelerisque hendrerit.</div>
<div class="t s" style="left:1057.8px;top:503.06px;font-size:14.93px;color:#1e1e1e;">Cursus enim auctor sit eros, nunc. Sed dictum a magna vulputate nibh vulputate sit</div>
<div class="t s" style="left:1057.8px;top:526.26px;font-size:14.93px;color:#1e1e1e;">euismod semper. Leo pellentesque morbi.</div>
<div class="t s" style="left:1056.2px;top:574.18px;font-size:11.6px;color:#6f6f6f;letter-spacing:0.05px;">SAMPLE</div>
<div class="t s" style="left:1056.2px;top:590.43px;font-size:15.2px;color:#3f6fe0;text-decoration:underline;text-underline-offset:3px;text-decoration-thickness:1px;">Lithium cobalt </div>
<div class="t s" style="left:1056.2px;top:613.33px;font-size:15.2px;color:#3f6fe0;text-decoration:underline;text-underline-offset:3px;text-decoration-thickness:1px;">(III) oxide</div>
<div class="t s" style="left:1301.7px;top:574.18px;font-size:11.6px;color:#6f6f6f;letter-spacing:0.05px;">INSTRUMENT</div>
<div class="t s" style="left:1301.7px;top:590.77px;font-size:14.8px;color:#1e1e1e;">ACAT</div>
<svg style="position:absolute;left:1538px;top:594px" width="19" height="18" viewBox="0 0 19 18"><path d="M4 14.5 L12.3 6.2" stroke="#5b008f" stroke-width="5" stroke-linecap="round"/><path d="M15.2 3.5 L16.2 2.5" stroke="#5b008f" stroke-width="4" stroke-linecap="round"/></svg>
<div class="t s" style="left:1562.8px;top:596.24px;font-size:14.6px;color:#5b008f;font-weight:700;">Edit</div>
<div class="t s" style="left:1055.5px;top:656.18px;font-size:11.6px;color:#6f6f6f;letter-spacing:0.05px;">START</div>
<div class="t s" style="left:1055.5px;top:672.34px;font-size:14.6px;color:#1e1e1e;">2021-06-11</div>
<div class="t s" style="left:1055.5px;top:695.64px;font-size:14.6px;color:#1e1e1e;">17:47:35</div>
<div class="t s" style="left:1299.7px;top:656.18px;font-size:11.6px;color:#6f6f6f;letter-spacing:0.05px;">END</div>
<div class="t s" style="left:1299.7px;top:672.34px;font-size:14.6px;color:#1e1e1e;">2021-06-11</div>
<div class="t s" style="left:1299.7px;top:695.64px;font-size:14.6px;color:#1e1e1e;">17:47:35</div>
<div class="t s" style="left:1545.0px;top:656.18px;font-size:11.6px;color:#6f6f6f;letter-spacing:0.05px;">DURATION</div>
<div class="t s" style="left:1545.0px;top:672.34px;font-size:14.6px;color:#1e1e1e;">00:00:02.1358</div>
<div class="t s" style="left:1712.4px;top:412.54px;font-size:19.8px;color:#1e1e1e;">Notes</div>
<div class="t s" style="left:1712.0px;top:449.36px;font-size:12.1px;color:#3f6fe0;text-decoration:underline;text-underline-offset:2px;text-decoration-thickness:1px;">A. Avarca</div>
<div class="t s" style="left:1855.5px;top:451.36px;font-size:12.1px;color:#6f6f6f;">2021-06-11  9:47:35PM</div>
<div class="t s" style="left:1712.0px;top:468.80px;font-size:15px;color:#1e1e1e;">Vulputate mauris pellentesque vitae</div>
<div class="t s" style="left:1712.0px;top:491.80px;font-size:15px;color:#1e1e1e;">scelerisque hendrerit. Cursus enim auctor sit</div>
<div class="t s" style="left:1712.0px;top:514.80px;font-size:15px;color:#1e1e1e;">eros, nunc.  Ac egestas nibh etiam.</div>
<div class="t s" style="left:1712.0px;top:570.16px;font-size:12.1px;color:#3f6fe0;text-decoration:underline;text-underline-offset:2px;text-decoration-thickness:1px;">M. Chan</div>
<div class="t s" style="left:1855.5px;top:572.36px;font-size:12.1px;color:#6f6f6f;">2021-06-14  12:35:07PM</div>
<div class="t s" style="left:1712.0px;top:590.00px;font-size:15px;color:#1e1e1e;">Acelerisque hendrerit. Cursus enim auctor sit</div>
<div class="t s" style="left:1712.0px;top:613.30px;font-size:15px;color:#1e1e1e;">eros, nunc.</div>
<div class="t s" style="left:1715.8px;top:657.38px;font-size:14.2px;color:#5b008f;font-weight:700;">View All Notes</div>
<svg style="position:absolute;left:1830px;top:657px" width="12" height="15" viewBox="0 0 12 15"><path d="M3.5 3 L8 7.5 L3.5 12" fill="none" stroke="#5b008f" stroke-width="2"/></svg>
<div class="b" style="left:1027px;top:783px;width:641px;height:69px;background:#eeeeee;"></div>
<div class="b" style="left:1027px;top:783px;width:183.5px;height:39px;background:#5b008f;border-radius:4px;"></div>
<svg style="position:absolute;left:1040px;top:794px" width="16" height="17" viewBox="0 0 16 17"><path d="M6 1 H10 V7 H13.5 L8 12.5 L2.5 7 H6 Z" fill="#fff"/><rect x="1.5" y="14" width="13" height="2" fill="#fff"/></svg>
<div class="t s" style="left:1062.7px;top:796.06px;font-size:14.1px;color:#fff;font-weight:700;">Download Selected</div>
<div class="b" style="left:1224px;top:783px;width:161.5px;height:39px;box-sizing:border-box;border:2px solid #5b008f;border-radius:4px;"></div>
<svg style="position:absolute;left:1238px;top:794px" width="15" height="18" viewBox="0 0 15 18"><path d="M4.5 1 H10.5 V2.5 H14 V4.5 H1 V2.5 H4.5 Z" fill="#5b008f"/><path d="M2 5.5 H13 L12 17 H3 Z" fill="#5b008f"/></svg>
<div class="t s" style="left:1260.5px;top:795.73px;font-size:14.5px;color:#5b008f;font-weight:700;">Delete Selected</div>
<div class="b" style="left:1462px;top:783px;width:177px;height:39px;box-sizing:border-box;border:2px solid #5b008f;border-radius:4px;"></div>
<div class="t s" style="left:1480.6px;top:796.06px;font-size:14.1px;color:#5b008f;font-weight:700;">Transfer with Globus</div>
<div class="b" style="left:1051px;top:830.5px;width:15px;height:14px;background:#5b008f;border-radius:2px;"></div>
<div class="b" style="left:1054.5px;top:837.2px;width:8px;height:1.3px;background:#fff;"></div>
<div class="t s" style="left:1092.6px;top:831.54px;font-size:12px;color:#6f6f6f;">FILE NAME</div>
<svg style="position:absolute;left:1162px;top:834px" width="10" height="6" viewBox="0 0 10 6"><path d="M0.5 0.5 H9.5 L5 5.5 Z" fill="#6f6f6f"/></svg>
<div class="t s" style="left:1423.3px;top:831.54px;font-size:12px;color:#6f6f6f;letter-spacing:0.2px;">SIZE</div>
<svg style="position:absolute;left:1456px;top:834px" width="10" height="6" viewBox="0 0 10 6"><path d="M0.5 0.5 H9.5 L5 5.5 Z" fill="#6f6f6f"/></svg>
<div class="b" style="left:1027px;top:852.5px;width:641px;height:38.8px;background:#fff;"></div>
<div class="b" style="left:1048px;top:861.5px;width:21px;height:21px;background:#5b008f;border-radius:2px;"></div>
<svg style="position:absolute;left:1048px;top:861.5px" width="21" height="21" viewBox="0 0 21 21"><path d="M5.5 10.5 L9 14 L15.5 7.5" fill="none" stroke="#fff" stroke-width="2.2"/></svg>
<svg style="position:absolute;left:1096.7px;top:863.7px" width="16" height="16" viewBox="0 0 16 16"><rect width="16" height="16" rx="1" fill="#5b008f"/><path d="M2.5 12.5 L5.5 8.5 L7.8 11.2 L10 8.5 L13.5 12.5 Z" fill="#fff"/></svg>
<div class="t s" style="left:1124.5px;top:865.54px;font-size:14.6px;color:#1e1e1e;">20210324100600_0001.dm4</div>
<div class="t s" style="left:1430.4px;top:866.22px;font-size:13.8px;color:#1e1e1e;letter-spacing:-0.4px;">1.7 MB</div>
<svg style="position:absolute;left:1627px;top:866.5px" width="10" height="12" viewBox="0 0 10 12"><path d="M3 1.5 L7.5 6 L3 10.5" fill="none" stroke="#8a8a8a" stroke-width="1.4"/></svg>
<div class="b" style="left:1027px;top:892.8px;width:641px;height:38.8px;background:#fff;"></div>
<div class="b" style="left:1048px;top:901.8px;width:21px;height:21px;background:#5b008f;border-radius:2px;"></div>
<svg style="position:absolute;left:1048px;top:901.8px" width="21" height="21" viewBox="0 0 21 21"><path d="M5.5 10.5 L9 14 L15.5 7.5" fill="none" stroke="#fff" stroke-width="2.2"/></svg>
<svg style="position:absolute;left:1096.7px;top:904.0px" width="16" height="16" viewBox="0 0 16 16"><rect width="16" height="16" rx="1" fill="#5b008f"/><path d="M2.5 12.5 L5.5 8.5 L7.8 11.2 L10 8.5 L13.5 12.5 Z" fill="#fff"/></svg>
<div class="t s" style="left:1124.5px;top:905.84px;font-size:14.6px;color:#1e1e1e;">20210324100600_0001.dm4</div>
<div class="t s" style="left:1430.4px;top:906.52px;font-size:13.8px;color:#1e1e1e;letter-spacing:-0.4px;">1.7 MB</div>
<svg style="position:absolute;left:1627px;top:906.8px" width="10" height="12" viewBox="0 0 10 12"><path d="M3 1.5 L7.5 6 L3 10.5" fill="none" stroke="#8a8a8a" stroke-width="1.4"/></svg>
<div class="b" style="left:1027px;top:933.1px;width:641px;height:38.8px;background:#fff;"></div>
<div class="b" style="left:1688px;top:783px;width:350px;height:200px;background:#fff;"></div>
<svg style="position:absolute;left:1711px;top:806px" width="18" height="18" viewBox="0 0 18 18"><path d="M3.2 3.3 L15 15.1 M15 3.3 L3.2 15.1" stroke="#5b008f" stroke-width="2.4" stroke-linecap="round"/></svg>
<div class="t s" style="left:1724.5px;top:860.40px;font-size:14.3px;color:#5b008f;font-weight:700;">File Details</div>
<div class="t s" style="left:1830.2px;top:859.72px;font-size:15.1px;color:#1e1e1e;">Metadata</div>
<div class="b" style="left:1709.6px;top:889px;width:198px;height:1px;background:#e4e4e4;"></div>
<div class="b" style="left:1709.6px;top:886.5px;width:106px;height:3.5px;background:#5b008f;border-radius:1px;"></div>
<div class="b" style="left:1709.6px;top:912.5px;width:285px;height:60px;box-sizing:border-box;border:1px solid #d0d0d0;background:#fff;"></div>
</body></html>
